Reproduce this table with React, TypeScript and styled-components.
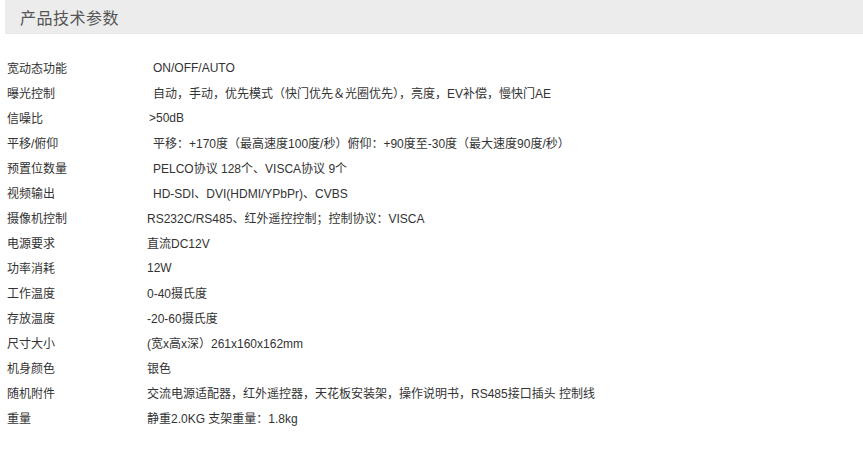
import styled, { createGlobalStyle } from "styled-components";

const GlobalStyle = createGlobalStyle`
  body {
    margin: 0;
    background: #fff;
    font-family: "Liberation Sans", Arial, "Noto Sans CJK SC", sans-serif;
  }
`;

type Spec = { label: string; value: string; indent?: number };

const specs: Spec[] = [
  { label: "宽动态功能", value: "ON/OFF/AUTO", indent: 6 },
  { label: "曝光控制", value: "自动，手动，优先模式（快门优先＆光圈优先），亮度，EV补偿，慢快门AE", indent: 6 },
  { label: "信噪比", value: ">50dB", indent: 2 },
  { label: "平移/俯仰", value: "平移：+170度（最高速度100度/秒）俯仰：+90度至-30度（最大速度90度/秒）", indent: 6 },
  { label: "预置位数量", value: "PELCO协议 128个、VISCA协议 9个", indent: 6 },
  { label: "视频输出", value: "HD-SDI、DVI(HDMI/YPbPr)、CVBS", indent: 6 },
  { label: "摄像机控制", value: "RS232C/RS485、红外遥控控制；控制协议：VISCA" },
  { label: "电源要求", value: "直流DC12V" },
  { label: "功率消耗", value: "12W" },
  { label: "工作温度", value: "0-40摄氏度" },
  { label: "存放温度", value: "-20-60摄氏度" },
  { label: "尺寸大小", value: "(宽x高x深）261x160x162mm" },
  { label: "机身颜色", value: "银色" },
  { label: "随机附件", value: "交流电源适配器，红外遥控器，天花板安装架，操作说明书，RS485接口插头 控制线" },
  { label: "重量", value: "静重2.0KG 支架重量：1.8kg" },
];

function App() {
  return (
    <Page>
      <GlobalStyle />
      <TitleBar>
        <Title>产品技术参数</Title>
      </TitleBar>
      <SpecList>
        {specs.map((s) => (
          <SpecRow key={s.label}>
            <Label>{s.label}</Label>
            <Value $indent={s.indent ?? 0}>{s.value}</Value>
          </SpecRow>
        ))}
      </SpecList>
    </Page>
  );
}

const Page = styled.div`
  width: 863px;
  overflow: hidden;
`;

const TitleBar = styled.div`
  margin-left: 5px;
  height: 33px;
  background: #ececec;
  border-bottom: 1px solid #e6e6e6;
  display: flex;
  align-items: center;
  padding-left: 15px;
`;

const Title = styled.h2`
  margin: 0;
  font-size: 16px;
  font-weight: normal;
  color: #555;
  letter-spacing: 0.5px;
`;

const SpecList = styled.div`
  margin-top: 21px;
  padding-left: 7px;
  display: flex;
  flex-direction: column;
`;

const SpecRow = styled.div`
  display: grid;
  grid-template-columns: 140px 1fr;
  height: 25px;
  align-items: center;
  font-size: 12px;
  color: #333;
`;

const Label = styled.span`
  white-space: nowrap;
`;

const Value = styled.span<{ $indent: number }>`
  padding-left: ${(p) => p.$indent}px;
  white-space: nowrap;
`;

export default App;
